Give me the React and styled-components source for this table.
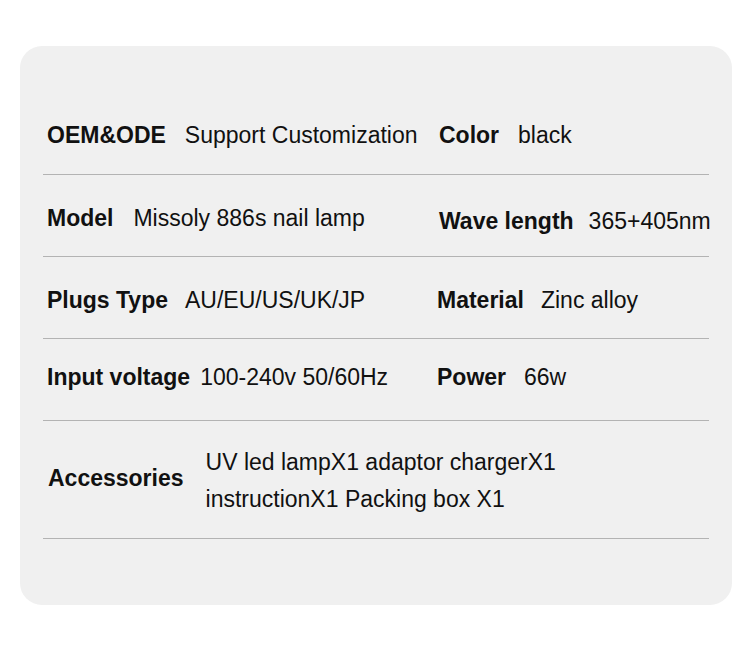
import styled, { createGlobalStyle } from "styled-components";

const GlobalStyle = createGlobalStyle`
    body {
        margin: 0;
        background: #ffffff;
        font-family: "Liberation Sans", Arial, sans-serif;
        color: #111111;
    }
`;

const Page = styled.div`
    width: 750px;
    height: 668px;
    padding: 46px 18px 0 20px;
    box-sizing: border-box;
`;

const Card = styled.div`
    width: 712px;
    height: 559px;
    box-sizing: border-box;
    background: #f0f0f0;
    border-radius: 22px;
    padding: 47px 23px 0 23px;
`;

const Row = styled.div`
    display: grid;
    grid-template-columns: 390px 1fr;
    align-items: center;
    height: ${(p) => p.$height || 82}px;
    border-bottom: 1px solid #b3b3b3;
    box-sizing: border-box;
    padding-left: 4px;
`;

const Cell = styled.div`
    display: flex;
    align-items: center;
    gap: ${(p) => p.$gap}px;
    font-size: 23px;
    line-height: 26px;
    padding-top: ${(p) => Math.max(p.$shift, 0)}px;
    padding-bottom: ${(p) => Math.max(-p.$shift, 0)}px;
    margin-left: ${(p) => p.$indent}px;
    white-space: nowrap;
`;

const Label = styled.span`
    font-weight: 700;
`;

const Value = styled.span`
    font-weight: 400;
`;

const Wide = styled.div`
    grid-column: 1 / -1;
    display: flex;
    align-items: center;
    gap: 22px;
    font-size: 23px;
    padding-left: 1px;
    padding-bottom: 2px;
    white-space: nowrap;
`;

const Lines = styled.div`
    line-height: 37px;
    padding-top: 4px;
`;

// label, value, vertical shift, gap, indent
const rows = [
    [["OEM&ODE", "Support Customization", 2, 19, 0], ["Color", "black", 2, 19, 2]],
    [["Model", "Missoly 886s nail lamp", 4, 20, 0], ["Wave length", "365+405nm", 10, 15, 2]],
    [["Plugs Type", "AU/EU/US/UK/JP", 5, 17, 0], ["Material", "Zinc alloy", 5, 17, 0]],
    [["Input voltage", "100-240v 50/60Hz", -6, 10, 0], ["Power", "66w", -6, 18, 0]],
];

export default function App() {
    return (
        <>
            <GlobalStyle />
            <Page>
                <Card>
                    {rows.map((r, i) => (
                        <Row key={i}>
                            {r.map(([label, value, shift, gap, indent]) => (
                                <Cell key={label} $shift={shift} $gap={gap} $indent={indent}>
                                    <Label>{label}</Label>
                                    <Value>{value}</Value>
                                </Cell>
                            ))}
                        </Row>
                    ))}
                    <Row $height={118}>
                        <Wide>
                            <Label>Accessories</Label>
                            <Lines>
                                UV led lampX1 adaptor chargerX1
                                <br />
                                instructionX1 Packing box X1
                            </Lines>
                        </Wide>
                    </Row>
                </Card>
            </Page>
        </>
    );
}
